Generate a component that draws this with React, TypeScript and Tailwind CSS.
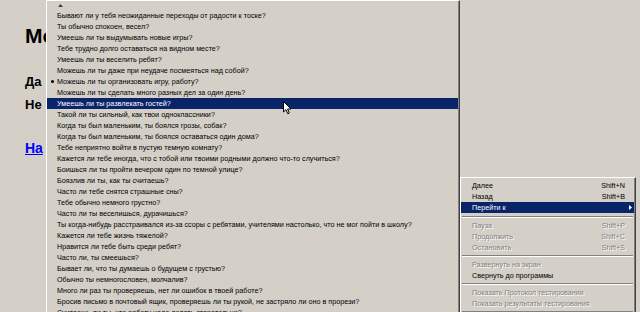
const questions = [
  "Бывают ли у тебя неожиданные переходы от радости к тоске?",
  "Ты обычно спокоен, весел?",
  "Умеешь ли ты выдумывать новые игры?",
  "Тебе трудно долго оставаться на видном месте?",
  "Умеешь ли ты веселить ребят?",
  "Можешь ли ты даже при неудаче посмеяться над собой?",
  "Можешь ли ты организовать игру, работу?",
  "Можешь ли ты сделать много разных дел за один день?",
  "Умеешь ли ты развлекать гостей?",
  "Такой ли ты сильный, как твои одноклассники?",
  "Когда ты был маленьким, ты боялся грозы, собак?",
  "Когда ты был маленьким, ты боялся оставаться один дома?",
  "Тебе неприятно войти в пустую темную комнату?",
  "Кажется ли тебе иногда, что с тобой или твоими родными должно что-то случиться?",
  "Боишься ли ты пройти вечером один по темной улице?",
  "Боязлив ли ты, как ты считаешь?",
  "Часто ли тебе снятся страшные сны?",
  "Тебе обычно немного грустно?",
  "Часто ли ты веселишься, дурачишься?",
  "Ты когда-нибудь расстраивался из-за ссоры с ребятами, учителями настолько, что не мог пойти в школу?",
  "Кажется ли тебе жизнь тяжелой?",
  "Нравится ли тебе быть среди ребят?",
  "Часто ли, ты смеешься?",
  "Бывает ли, что ты думаешь о будущем с грустью?",
  "Обычно ты немногословен, молчалив?",
  "Много ли раз ты проверяешь, нет ли ошибок в твоей работе?",
  "Бросив письмо в почтовый ящик, проверяешь ли ты рукой, не застряло ли оно в прорези?",
  "Считаешь ли ты, что работу надо делать старательно?",
];

const CHECKED = 6;
const ACTIVE = 8;

type Cmd =
  | { sep: true }
  | { label: string; keys?: string; disabled?: boolean; active?: boolean; sub?: boolean; sep?: false };

const commands: Cmd[] = [
  { label: "Далее", keys: "Shift+N" },
  { label: "Назад", keys: "Shift+B" },
  { label: "Перейти к", active: true, sub: true },
  { sep: true },
  { label: "Пауза", keys: "Shift+P", disabled: true },
  { label: "Продолжить", keys: "Shift+C", disabled: true },
  { label: "Остановить", keys: "Shift+S", disabled: true },
  { sep: true },
  { label: "Развернуть на экран", disabled: true },
  { label: "Свернуть до программы" },
  { sep: true },
  { label: "Показать Протокол тестирования", disabled: true },
  { label: "Показать результаты тестирования", disabled: true },
  { sep: true },
];

function Separator({ first }: { first?: boolean }) {
  return (
    <div className={`${first ? "h-[7px]" : "h-[6px]"} flex flex-col justify-center px-px`}>
      <div className="h-px bg-[#808080]" />
      <div className="h-px bg-white" />
    </div>
  );
}

export default function App() {
  let sepCount = 0;
  return (
    <div className="relative w-[640px] h-[312px] overflow-hidden bg-[#d4d0c8] font-['Liberation_Sans',Arial,sans-serif]">
      {/* page behind the menu, only its left strip shows */}
      <div className="w-[46px] overflow-hidden pl-[25px] pt-[24px] text-black whitespace-nowrap">
        <h1 className="text-[21px] leading-[24px] font-bold">Мо</h1>
        <p className="mt-[26px] text-[13px] leading-[16px] font-bold">Да</p>
        <p className="mt-[7px] text-[13px] leading-[16px] font-bold">Не</p>
        <a className="block mt-[27px] text-[14px] leading-[16px] font-bold text-[#0000ff] underline">На</a>
      </div>

      {/* question menu */}
      <div className="absolute left-[46px] top-0 w-[414px] h-[330px] bg-[#d4d0c8] border-t border-l border-t-white border-l-white border-r border-r-[#404040]">
        <div className="h-full border-r border-r-[#808080] text-[7.2px] leading-[11px] text-black">
          <div className="h-[9px] flex items-center pl-[11px]">
            <svg width="5" height="3" viewBox="0 0 5 3">
              <polygon points="2.5,0 5,3 0,3" fill="#404040" />
            </svg>
          </div>
          {questions.map((q, i) => (
            <div
              key={i}
              className={`h-[11px] flex items-center whitespace-nowrap ${i === ACTIVE ? "bg-[#0a246a] text-white" : ""}`}
            >
              <div className="w-[10px] flex justify-center">
                {i === CHECKED && <div className="w-[3px] h-[3px] rounded-full bg-black" />}
              </div>
              <span>{q}</span>
            </div>
          ))}
        </div>
      </div>

      {/* command popup */}
      <div className="absolute left-[460px] top-[177px] w-[176px] h-[150px] bg-[#d4d0c8] border-t border-l border-t-white border-l-white border-r border-r-[#404040]">
        <div className="h-full pt-[2px] border-r border-r-[#808080] text-[7.2px] leading-[11px]">
          {commands.map((c, i) => {
            if (c.sep) {
              sepCount += 1;
              return <Separator key={i} first={sepCount === 1} />;
            }
            return (
              <div
                key={i}
                className={`h-[11px] flex items-center justify-between whitespace-nowrap pl-[11px] ${
                  c.sub ? "pr-[2px]" : "pr-[9px]"
                } ${
                  c.active
                    ? "bg-[#0a246a] text-white"
                    : c.disabled
                      ? "text-[#808080] [text-shadow:1px_1px_0_#ffffff]"
                      : "text-black"
                }`}
              >
                <span>{c.label}</span>
                {c.keys && <span>{c.keys}</span>}
                {c.sub && (
                  <svg width="3" height="5" viewBox="0 0 3 5">
                    <polygon points="0,0 3,2.5 0,5" fill="currentColor" />
                  </svg>
                )}
              </div>
            );
          })}
        </div>
      </div>

      {/* mouse pointer */}
      <svg className="absolute left-[283px] top-[101px]" width="9" height="14" viewBox="0 0 9 14">
        <path
          d="M0.5 0.5 L0.5 11 L3 8.6 L4.8 12.8 L6.3 12.1 L4.6 8 L8 8 Z"
          fill="#ffffff"
          stroke="#000000"
          strokeWidth="1"
          strokeLinejoin="miter"
        />
      </svg>
    </div>
  );
}
